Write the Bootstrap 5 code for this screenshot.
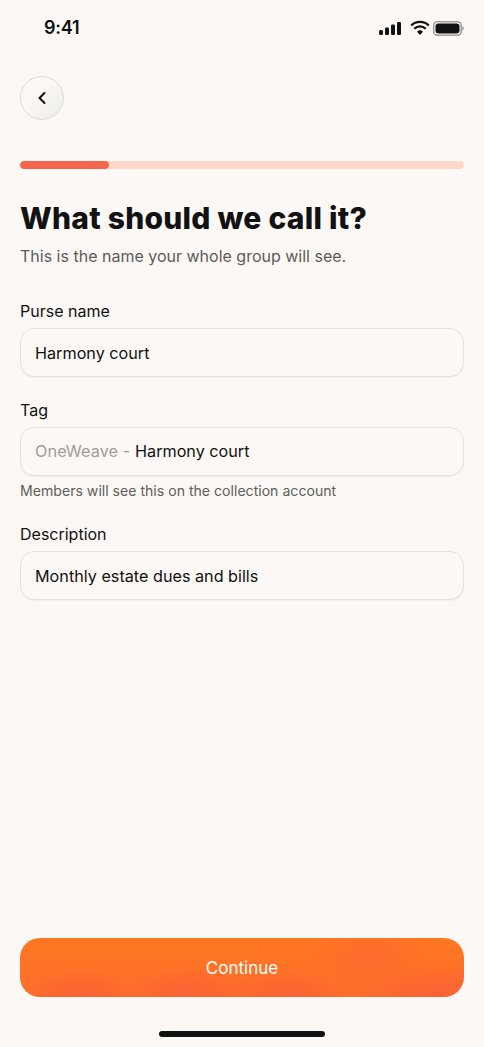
<!DOCTYPE html>
<html lang="en">
<head>
<meta charset="utf-8">
<title>Name your purse</title>
<link href="https://cdn.jsdelivr.net/npm/bootstrap@5.3.0/dist/css/bootstrap.min.css" rel="stylesheet">
<style>
html,body{height:100%}
body{background:#fcf8f5;color:#111;font-family:"Inter","Noto Sans",sans-serif;overflow:hidden}
.screen{height:1047px;padding:0 20px}
.status{height:76px;padding:0 0 20px 24px}
.clock{font-size:18px;font-weight:600;letter-spacing:-.2px;line-height:1}
.back{width:44px;height:44px;border:1px solid #dedbd8;background:linear-gradient(135deg,#fcf9f7 35%,#eceae7);padding:0}
.back:hover{background:#f2efec}
.track{height:8px;margin-top:41px;background:#fdd8cb;border-radius:4px}
.track .progress-bar{background:#f4674c;border-radius:4px}
.ttl{font-weight:800;font-size:30px;line-height:40px;letter-spacing:.25px;margin:29px 0 0;color:#121212}
.sub{font-size:16px;line-height:24px;color:#5d5b59;margin:6px 0 0}
.lbl{font-size:16px;font-weight:400;line-height:24px;color:#111;margin:0 0 5px}
.fld{height:49px;border:1.5px solid #e4e1de;border-radius:14px;background:#fcf8f5;padding:0 14px;font-size:16.2px;color:#111;box-shadow:0 1px 1px rgba(0,0,0,.04)}
.fld:focus{background:#fcf8f5;border-color:#f4674c;box-shadow:none}
.pre{color:#a09d99;white-space:pre;letter-spacing:.1px}
.help{font-size:14.1px;line-height:20px;color:#605e5c;margin-top:5px}
.grp{margin-bottom:21px}
.grp-first{margin-top:7px}
.go{height:59px;border:0;border-radius:20px;color:#fff;font-size:17px;padding-top:8px;background:radial-gradient(60px 28px at 14% 100%,#fa6136,transparent),radial-gradient(70px 30px at 38% 100%,#fb6136,transparent),radial-gradient(60px 28px at 60% 100%,#fb6136,transparent),radial-gradient(80px 34px at 94% 100%,#fa6136,transparent),radial-gradient(60px 30px at 79% 30%,#fd6b2e,transparent),linear-gradient(#ff7722,#fd6e2c)}
.go:hover{color:#fff}
.home{width:166px;height:6px;background:#111;border-radius:3px;margin:34px auto 10px}
</style>
</head>
<body>
<main class="screen d-flex flex-column">
  <header class="status d-flex align-items-center justify-content-between">
    <span class="clock">9:41</span>
    <svg width="86" height="16" viewBox="-1 -1 86 16" aria-hidden="true">
      <g fill="#111">
        <rect x="0" y="9" width="4" height="5" rx="1.500"/><rect x="6" y="6.500" width="4" height="7.500" rx="1.200"/><rect x="12" y="3.500" width="4" height="10.500" rx="1.200"/><rect x="18" y="1" width="4" height="13" rx="1.200"/>
        <path d="M38 10.800l3 3.200 3-3.200a4.300 4.300 0 0 0-6 0z"/>
      </g>
      <g fill="none" stroke="#111" stroke-width="2.300">
        <path d="M35.300 7.800a8 8 0 0 1 11.400 0"/><path d="M32.200 4.500a12.500 12.500 0 0 1 17.600 0"/>
      </g>
      <rect x="54.700" y=".7" width="27.600" height="13.600" rx="4" fill="none" stroke="#a09e9b" stroke-width="1.600"/>
      <rect x="56.500" y="2.500" width="24" height="10" rx="3" fill="#111"/>
      <rect x="83.300" y="5.500" width="1.400" height="4" rx=".7" fill="#a5a3a0"/>
    </svg>
  </header>
  <button class="btn back rounded-circle d-flex align-items-center justify-content-center" type="button" aria-label="Back">
    <svg width="10" height="14" viewBox="0 0 10 14" aria-hidden="true"><path d="M7.500 2 2.500 7l5 5" fill="none" stroke="#111" stroke-width="2" stroke-linecap="round" stroke-linejoin="round"/></svg>
  </button>
  <div class="progress track"><div class="progress-bar" style="width:20%"></div></div>
  <h1 class="ttl">What should we call it?</h1>
  <p class="sub">This is the name your whole group will see.</p>
  <form class="d-flex flex-column mt-4 flex-grow-1">
    <div class="grp grp-first">
      <label class="form-label lbl" for="p">Purse name</label>
      <input class="form-control fld" id="p" value="Harmony court">
    </div>
    <div class="grp">
      <label class="form-label lbl" for="t">Tag</label>
      <div class="form-control fld d-flex align-items-center" id="t"><span class="pre">OneWeave - </span><span>Harmony court</span></div>
      <div class="help">Members will see this on the collection account</div>
    </div>
    <div>
      <label class="form-label lbl" for="d">Description</label>
      <input class="form-control fld" id="d" value="Monthly estate dues and bills">
    </div>
    <button class="btn go w-100 mt-auto" type="button">Continue</button>
  </form>
  <div class="home"></div>
</main>
<script src="https://cdn.jsdelivr.net/npm/bootstrap@5.3.0/dist/js/bootstrap.bundle.min.js"></script>
</body>
</html>
